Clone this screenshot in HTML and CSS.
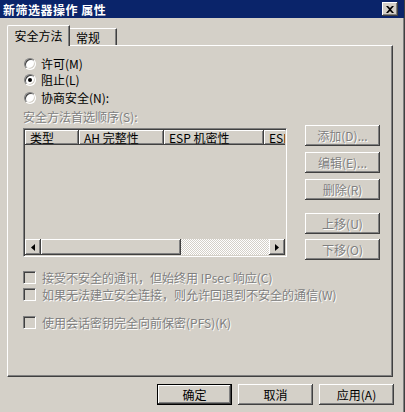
FILE: index.html
```html
<!DOCTYPE html>
<html lang="zh-CN">
<head>
<meta charset="utf-8">
<title>新筛选器操作 属性</title>
<link rel="stylesheet" href="styles.css">
</head>
<body>
<div class="window">
  <div class="titlebar">
    <span class="title">新筛选器操作 属性</span>
    <span class="close"><svg width="8" height="7" viewBox="0 0 8 7"><path d="M0 0h2l2 2 2-2h2L5 3.5 8 7H6L4 5 2 7H0l3-3.5z" fill="#000"/></svg></span>
  </div>
  <div class="main">
    <div class="tabs">
      <div class="tab active">安全方法</div>
      <div class="tab">常规</div>
    </div>
    <div class="panel">
      <div class="opt r1"><span class="radio"></span><span>许可(M)</span></div>
      <div class="opt r2"><span class="radio on"></span><span>阻止(L)</span></div>
      <div class="opt r3"><span class="radio"></span><span>协商安全(N):</span></div>
      <div class="mid">
        <div class="leftcol">
          <div class="dis lbl">安全方法首选顺序(S):</div>
          <div class="list">
            <div class="lhead">
              <div class="hc c1">类型</div>
              <div class="hc c2">AH 完整性</div>
              <div class="hc c3">ESP 机密性</div>
              <div class="hc c4">ESP</div>
            </div>
            <div class="lbody"></div>
            <div class="hscroll">
              <div class="sbtn"><svg width="4" height="7" viewBox="0 0 4 7"><path d="M4 0v7L0 3.5z" fill="#000"/></svg></div>
              <div class="thumb"></div>
              <div class="track"></div>
              <div class="sbtn"><svg width="4" height="7" viewBox="0 0 4 7"><path d="M0 0v7l4-3.5z" fill="#000"/></svg></div>
            </div>
          </div>
        </div>
        <div class="rightcol">
          <div class="btn dis b1">添加(D)...</div>
          <div class="btn dis b2">编辑(E)...</div>
          <div class="btn dis b3">删除(R)</div>
          <div class="btn dis b4">上移(U)</div>
          <div class="btn dis">下移(O)</div>
        </div>
      </div>
      <div class="chk k1"><span class="box"></span><span class="dis">接受不安全的通讯，但始终用 IPsec 响应(C)</span></div>
      <div class="chk k2"><span class="box"></span><span class="dis">如果无法建立安全连接，则允许回退到不安全的通信(W)</span></div>
      <div class="chk k3"><span class="box"></span><span class="dis">使用会话密钥完全向前保密(PFS)(K)</span></div>
    </div>
    <div class="footer">
      <div class="btn default">确定</div>
      <div class="btn">取消</div>
      <div class="btn">应用(A)</div>
    </div>
  </div>
</div>
</body>
</html>
```

FILE: styles.css
```css
html, body {
  margin: 0;
  padding: 0;
}
body {
  width: 405px;
  height: 412px;
  overflow: hidden;
  background: #d4d0c8;
  font-family: "Noto Sans CJK SC", "Noto Sans", sans-serif;
  font-size: 12px;
  line-height: 13px;
  color: #000;
}
.window {
  width: 405px;
  height: 412px;
  box-sizing: border-box;
  border-right: 1px solid #404040;
  box-shadow: inset -1px 0 #808080;
  display: flex;
  flex-direction: column;
}
.titlebar {
  height: 18px;
  background: #0a246a;
  display: flex;
  align-items: center;
  justify-content: space-between;
  padding: 0 6px 0 3px;
}
.title {
  color: #fff;
  font-weight: bold;
  font-size: 12px;
  letter-spacing: 0.5px;
}
.close {
  width: 16px;
  height: 14px;
  box-sizing: border-box;
  background: #d4d0c8;
  box-shadow: inset -1px -1px #404040, inset 1px 1px #fff, inset -2px -2px #808080;
  display: flex;
  align-items: center;
  justify-content: center;
}
.main {
  flex: 1;
  padding: 7px 0 0 7px;
  display: flex;
  flex-direction: column;
}
.tabs {
  display: flex;
  align-items: flex-end;
  height: 20px;
}
.tab {
  box-sizing: border-box;
  height: 17px;
  width: 47px;
  padding-left: 6px;
  border-top: 1px solid #fff;
  border-right: 1px solid #404040;
  box-shadow: inset -1px 0 #808080;
  display: flex;
  align-items: center;
  background: #d4d0c8;
}
.tab.active {
  position: relative;
  z-index: 1;
  height: 21px;
  width: 63px;
  margin-bottom: -1px;
  padding-left: 0;
  justify-content: center;
  border-left: 1px solid #fff;
  border-top-left-radius: 2px;
  padding-bottom: 2px;
}
.panel {
  width: 386px;
  height: 332px;
  box-sizing: border-box;
  border-top: 1px solid #fff;
  border-left: 1px solid #fff;
  border-right: 1px solid #404040;
  border-bottom: 1px solid #404040;
  box-shadow: inset -1px -1px #808080;
  padding: 11px 0 0 15px;
  display: flex;
  flex-direction: column;
}
.opt {
  display: flex;
  align-items: center;
  height: 13px;
  gap: 5px;
  margin-left: 1px;
}
.r2 { margin-top: 3px; }
.r3 { margin-top: 5px; }
.radio {
  width: 12px;
  height: 12px;
  box-sizing: border-box;
  border-radius: 50%;
  background: #fff;
  border: 1px solid;
  border-color: #808080 #fff #fff #808080;
  box-shadow: inset 1px 1px 0 #404040, inset -1px -1px 0 #d4d0c8;
  display: flex;
  align-items: center;
  justify-content: center;
}
.radio.on::after {
  content: "";
  width: 4px;
  height: 4px;
  border-radius: 50%;
  background: #000;
}
.dis {
  color: #808080;
  text-shadow: 1px 1px 0 #fff;
}
.mid {
  display: flex;
  margin-top: 6px;
}
.leftcol {
  width: 264px;
  display: flex;
  flex-direction: column;
}
.lbl {
  height: 13px;
}
.list {
  margin-top: 5px;
  height: 129px;
  box-sizing: border-box;
  border: 1px solid;
  border-color: #808080 #fff #fff #808080;
  box-shadow: inset 1px 1px #404040, inset -1px -1px #d4d0c8;
  padding: 1px;
  display: flex;
  flex-direction: column;
  overflow: hidden;
}
.lhead {
  display: flex;
  height: 15px;
  flex-shrink: 0;
  overflow: hidden;
}
.hc {
  box-sizing: border-box;
  height: 15px;
  line-height: 15px;
  padding-left: 5px;
  flex-shrink: 0;
  white-space: nowrap;
  box-shadow: inset -1px -1px #404040, inset 1px 1px #fff, inset -2px -2px #808080;
}
.c1 { width: 54px; }
.c2 { width: 85px; }
.c3 { width: 100px; }
.c4 { width: 40px; }
.lbody {
  flex: 1;
}
.hscroll {
  height: 16px;
  display: flex;
  flex-shrink: 0;
}
.sbtn, .thumb {
  box-sizing: border-box;
  background: #d4d0c8;
  box-shadow: inset -1px -1px #404040, inset 1px 1px #fff, inset -2px -2px #808080;
}
.sbtn {
  width: 16px;
  display: flex;
  align-items: center;
  justify-content: center;
}
.thumb {
  width: 140px;
}
.track {
  flex: 1;
  background: repeating-conic-gradient(#fff 0 25%, #d4d0c8 0 50%) 0 0 / 2px 2px;
}
.rightcol {
  margin-left: 18px;
  margin-top: 15px;
  display: flex;
  flex-direction: column;
}
.btn {
  width: 75px;
  height: 21px;
  box-sizing: border-box;
  background: #d4d0c8;
  box-shadow: inset -1px -1px #404040, inset 1px 1px #fff, inset -2px -2px #808080;
  display: flex;
  align-items: center;
  justify-content: center;
  white-space: nowrap;
}
.b1, .b2 { margin-bottom: 6px; }
.b3 { margin-bottom: 13px; }
.b4 { margin-bottom: 5px; }
.chk {
  display: flex;
  align-items: center;
  height: 13px;
  gap: 6px;
  white-space: nowrap;
}
.k1 { margin-top: 11px; }
.k2 { margin-top: 4px; }
.k3 { margin-top: 15px; }
.box {
  width: 13px;
  height: 13px;
  box-sizing: border-box;
  border: 1px solid;
  border-color: #808080 #fff #fff #808080;
  box-shadow: inset 1px 1px #404040, inset -1px -1px #d4d0c8;
  background: #d4d0c8;
}
.footer {
  display: flex;
  justify-content: flex-end;
  gap: 6px;
  margin-top: 7px;
  padding-right: 10px;
}
.btn.default {
  box-shadow: inset 0 0 0 1px #000, inset -2px -2px #404040, inset 2px 2px #fff, inset -3px -3px #808080;
}
```
